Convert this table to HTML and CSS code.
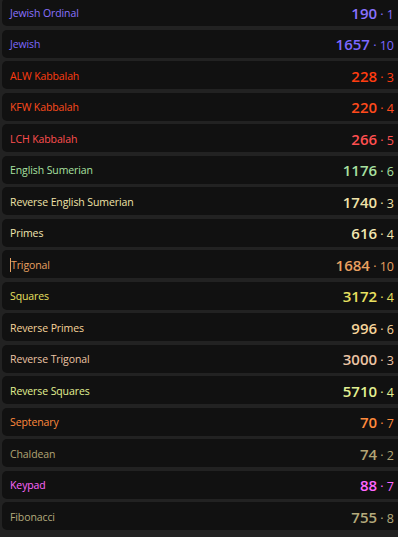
FILE: index.html
```html
<!DOCTYPE html>
<html>
<head>
<meta charset="utf-8">
<link rel="stylesheet" href="styles.css">
</head>
<body>
<div class="list">
  <div class="row c-jo"><span class="name">Jewish Ordinal</span><span class="val"><b>190</b> · 1</span></div>
  <div class="row c-jw"><span class="name">Jewish</span><span class="val"><b>1657</b> · 10</span></div>
  <div class="row c-alw"><span class="name">ALW Kabbalah</span><span class="val"><b>228</b> · 3</span></div>
  <div class="row c-kfw"><span class="name">KFW Kabbalah</span><span class="val"><b>220</b> · 4</span></div>
  <div class="row c-lch"><span class="name">LCH Kabbalah</span><span class="val"><b>266</b> · 5</span></div>
  <div class="row c-es"><span class="name">English Sumerian</span><span class="val"><b>1176</b> · 6</span></div>
  <div class="row c-res"><span class="name">Reverse English Sumerian</span><span class="val"><b>1740</b> · 3</span></div>
  <div class="row c-pr"><span class="name">Primes</span><span class="val"><b>616</b> · 4</span></div>
  <div class="row c-tr"><span class="name"><span class="caret"></span>Trigonal</span><span class="val"><b>1684</b> · 10</span></div>
  <div class="row c-sq"><span class="name">Squares</span><span class="val"><b>3172</b> · 4</span></div>
  <div class="row c-rpr"><span class="name">Reverse Primes</span><span class="val"><b>996</b> · 6</span></div>
  <div class="row c-rtr"><span class="name">Reverse Trigonal</span><span class="val"><b>3000</b> · 3</span></div>
  <div class="row c-rsq"><span class="name">Reverse Squares</span><span class="val"><b>5710</b> · 4</span></div>
  <div class="row c-sep"><span class="name">Septenary</span><span class="val"><b>70</b> · 7</span></div>
  <div class="row c-ch"><span class="name">Chaldean</span><span class="val"><b>74</b> · 2</span></div>
  <div class="row c-kp"><span class="name">Keypad</span><span class="val"><b>88</b> · 7</span></div>
  <div class="row c-fib"><span class="name">Fibonacci</span><span class="val"><b>755</b> · 8</span></div>
</div>
</body>
</html>
```
FILE: styles.css
```css
html, body {
  margin: 0;
  padding: 0;
  background: #222222;
  overflow: hidden;
}
body {
  font-family: "Open Sans", "Noto Sans", sans-serif;
  width: 398px;
  height: 537px;
}
.list {
  display: flex;
  flex-direction: column;
  gap: 3.5px;
  margin-top: -2px;
  padding-left: 2px;
  margin-right: -6px;
}
.row {
  height: 28px;
  box-sizing: border-box;
  background: #111111;
  border-radius: 5px;
  display: flex;
  align-items: center;
  justify-content: space-between;
  padding: 1px 10px 0 8px;
}
.name {
  font-size: 10.5px;
  font-weight: 500;
  letter-spacing: -0.1px;
  display: flex;
  align-items: center;
}
.val {
  font-size: 12.5px;
  font-weight: 400;
}
.val b {
  font-size: 15px;
  font-weight: 600;
}
.caret {
  display: inline-block;
  width: 1px;
  height: 14px;
  background: #e8a060;
}
.c-jo { color: #8a72ff; }
.c-jw { color: #7d68ff; }
.c-alw { color: #ff3c10; }
.c-kfw { color: #ff4a1c; }
.c-lch { color: #ff4f4f; }
.c-es { color: #a8e0a0; }
.c-res { color: #f0e2a8; }
.c-pr { color: #f2e6b0; }
.c-tr { color: #e8a060; }
.c-sq { color: #e8e060; }
.c-rpr { color: #f6d49a; }
.c-rtr { color: #ecc4a4; }
.c-rsq { color: #e2f092; }
.c-sep { color: #ff8a3c; }
.c-ch { color: #b2a474; }
.c-kp { color: #ff66ff; }
.c-fib { color: #b4aa7c; }
```
